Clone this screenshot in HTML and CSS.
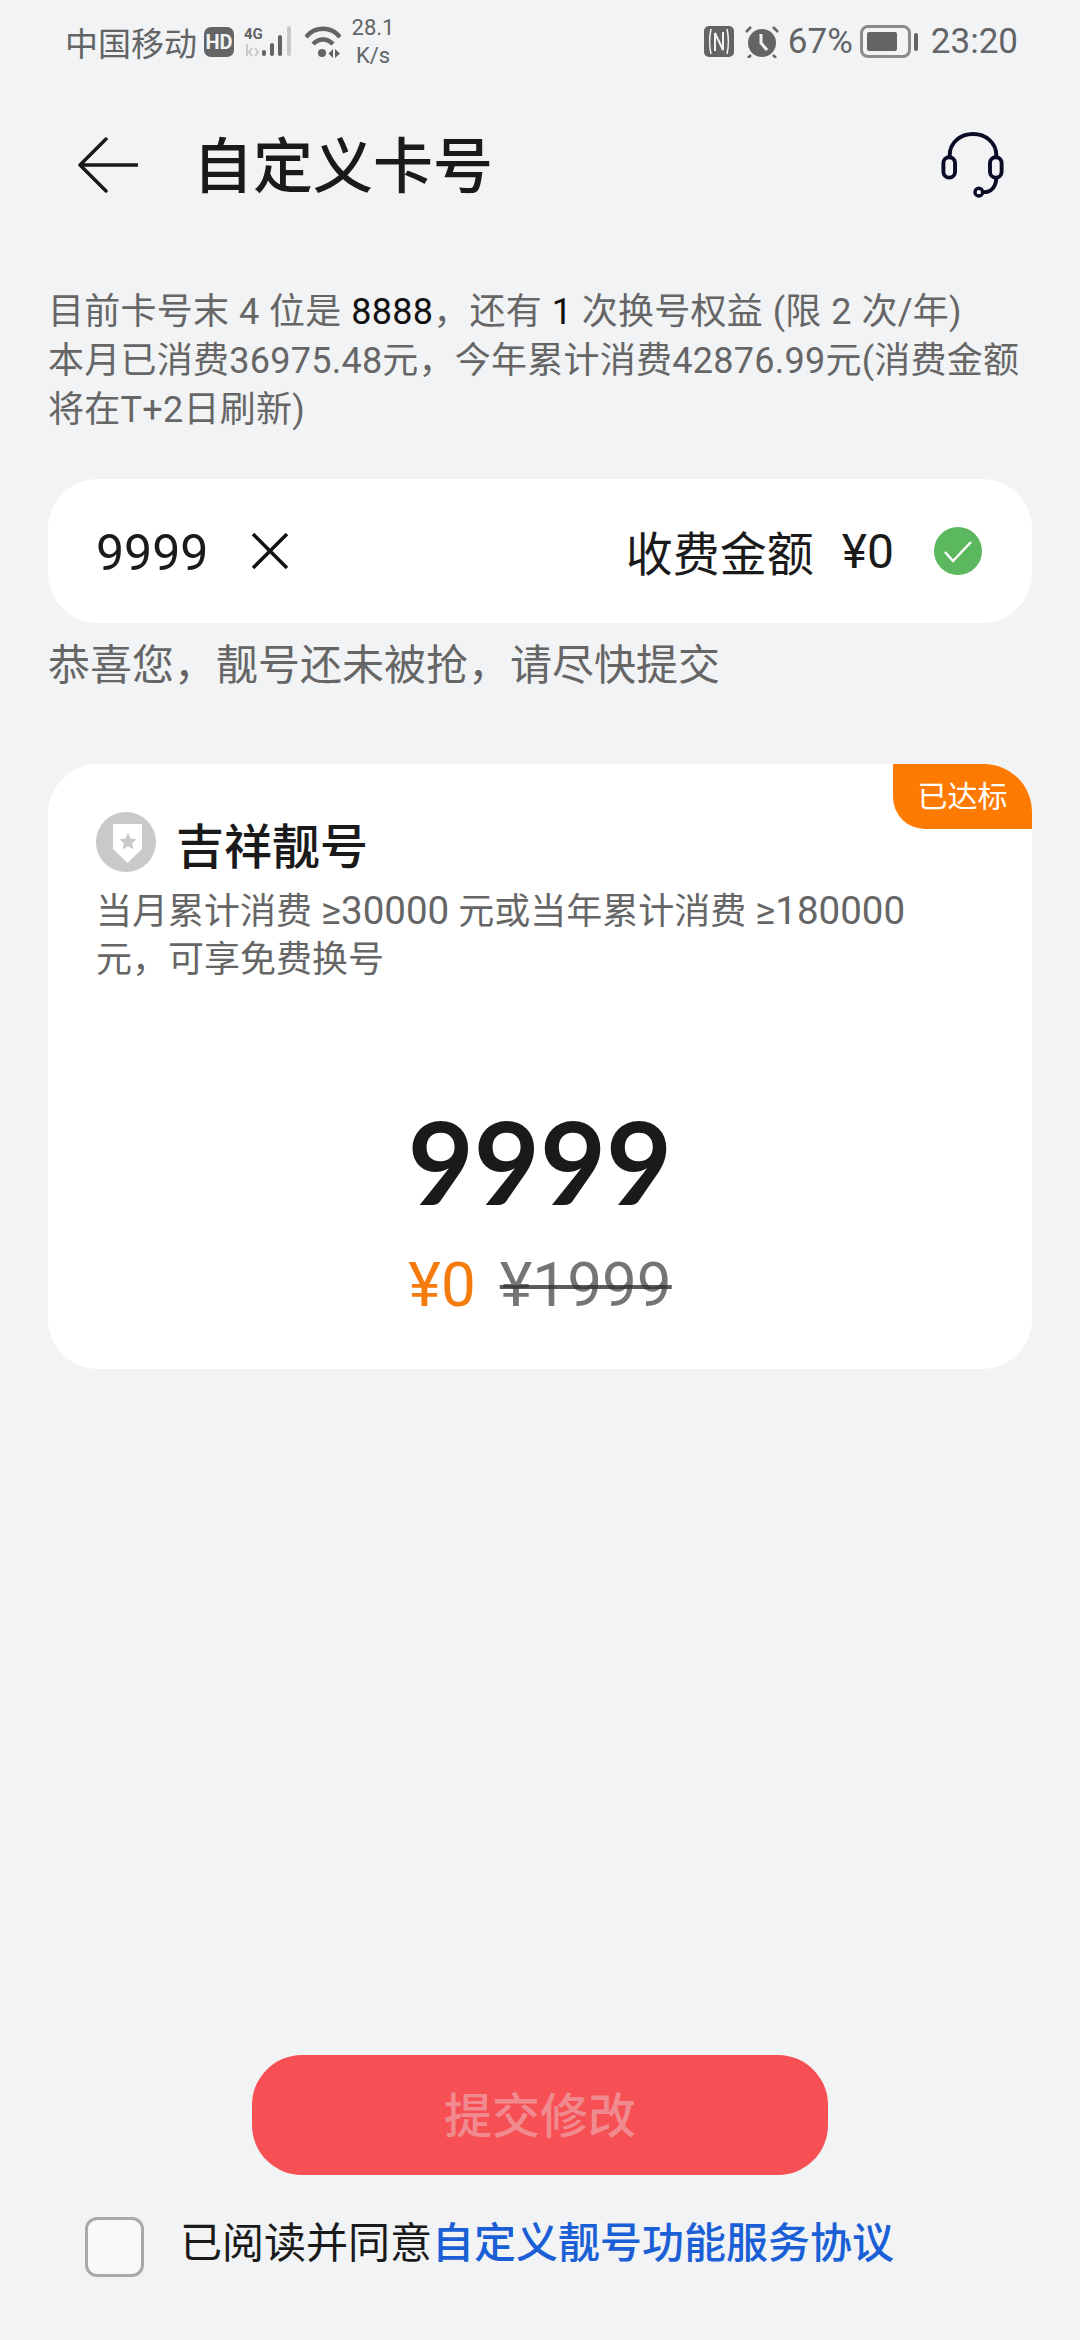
FILE: index.html
```html
<!DOCTYPE html>
<html lang="zh-CN">
  <head>
    <meta charset="UTF-8" />
    <meta name="viewport" content="width=device-width, initial-scale=1.0" />
    <title>自定义卡号</title>
    <link rel="stylesheet" href="styles.css">
  </head>
  <body>
    <div class="page">
      <div class="statusbar">
        <div class="status-left">
          <span class="carrier">中国移动</span>
          <span class="hd">HD</span>
          <svg class="signal" width="50" height="32" viewBox="0 0 50 32">
            <text x="0" y="13" class="signal-4g">4G</text>
            <path d="M3 18v12M8 22l-3 4 3 4M11 22l3 4-3 4" fill="none" stroke="#c8c9cb" stroke-width="2"/>
            <rect x="18" y="24" width="4" height="6" rx="2" fill="#636466"/>
            <rect x="26" y="17" width="4" height="13" rx="2" fill="#636466"/>
            <rect x="34" y="9" width="4" height="21" rx="2" fill="#636466"/>
            <rect x="43" y="0" width="4" height="30" rx="2" fill="#c8c9cb"/>
          </svg>
          <svg class="wifi" width="36" height="32" viewBox="0 0 36 32">
            <path d="M1 11C10 0 26 0 35 11M8 18c6-6 14-6 20 0" fill="none" stroke="#636466" stroke-width="4.500"/>
            <circle cx="17" cy="27" r="4" fill="#636466"/>
            <path d="M28 23l-4.500 4.500 4.500 4.500zM30 23l5 4.500-5 4.500z" fill="#636466"/>
          </svg>
          <span class="speed">28.1<br>K/s</span>
        </div>
        <div class="status-right">
          <svg width="30" height="31" viewBox="0 0 30 31">
            <rect width="30" height="31" rx="5" fill="#636466"/>
            <path d="M7 3C5 12 5 19 7 28M23 3C25 12 25 19 23 28" fill="none" stroke="#f1f3f5" stroke-width="1.500"/>
            <path d="M11 25V7l8 17V6" fill="none" stroke="#f1f3f5" stroke-width="2"/>
          </svg>
          <svg class="alarm" width="34" height="32" viewBox="0 0 34 32">
            <circle cx="17" cy="17" r="14" fill="#636466"/>
            <path d="M16 8v9l6 7" fill="none" stroke="#f1f3f5" stroke-width="3"/>
            <path d="M1 6l5-5M33 6l-5-5M6 29l-3 3M28 29l3 3" stroke="#636466" stroke-width="2.500"/>
          </svg>
          <span class="percent">67%</span>
          <span class="battery"><span class="battery-level"></span></span>
          <span class="battery-cap"></span>
          <span class="clock">23:20</span>
        </div>
      </div>

      <div class="nav">
        <svg class="back" width="60" height="56" viewBox="0 0 60 56">
          <path d="M59 28H2M28 2L2 28 28 54" fill="none" stroke="#1a1a1a" stroke-width="3.500" stroke-linecap="round" stroke-linejoin="round"/>
        </svg>
        <h1 class="nav-title">自定义卡号</h1>
        <svg class="headset" width="66" height="66" viewBox="0 0 66 68">
          <path d="M9 26V24C9 11 20 2 33 2S57 11 57 24V26" fill="none" stroke="#0b0b26" stroke-width="4"/>
          <rect x="2.500" y="26" width="12" height="21" rx="6" fill="none" stroke="#0b0b26" stroke-width="4"/>
          <rect x="50.500" y="26" width="12" height="21" rx="6" fill="none" stroke="#0b0b26" stroke-width="4"/>
          <path d="M57 47C57 56 52 62 44 62" fill="none" stroke="#0b0b26" stroke-width="4"/>
          <circle cx="39" cy="62" r="4" fill="none" stroke="#0b0b26" stroke-width="3.500"/>
        </svg>
      </div>

      <p class="intro">
        目前卡号末 4 位是 <b>8888</b>，还有 <b>1</b> 次换号权益 (限 2 次/年)<br>
        本月已消费36975.48元，今年累计消费42876.99元(消费金额<br>
        将在T+2日刷新)
      </p>

      <div class="input-card">
        <span class="input-value">9999</span>
        <svg class="clear" width="38" height="36" viewBox="0 0 38 36">
          <path d="M2 1l34 34M36 1L2 35" stroke="#111" stroke-width="3.500" fill="none"/>
        </svg>
        <span class="fee-label">收费金额</span>
        <span class="fee-value">¥0</span>
        <svg class="ok" width="48" height="48" viewBox="0 0 48 48">
          <circle cx="24" cy="24" r="24" fill="#5cb85f"/>
          <path d="M11 25l8 9 18-19" fill="none" stroke="#fff" stroke-width="2.500"/>
        </svg>
      </div>

      <p class="hint">恭喜您，靓号还未被抢，请尽快提交</p>

      <div class="card">
        <span class="tag">已达标</span>
        <div class="card-head">
          <svg width="60" height="60" viewBox="0 0 60 60">
            <circle cx="30" cy="30" r="30" fill="#c9c9c9"/>
            <path d="M17 12H46V37L31.500 51 17 37z" fill="#fff"/>
            <path d="M32 21l2.500 5.500 6 .7-4.400 4 1.200 6L32 34.200 26.700 37.200l1.200-6-4.400-4 6-.7z" fill="#c9c9c9"/>
          </svg>
          <h2 class="card-title">吉祥靓号</h2>
        </div>
        <p class="card-desc">当月累计消费 <span class="num">≥30000</span> 元或当年累计消费 <span class="num">≥180000</span><br>元，可享免费换号</p>
        <div class="number">9999</div>
        <div class="price">
          <span class="price-now">¥0</span>
          <span class="price-old">¥1999</span>
        </div>
      </div>

      <div class="footer">
        <button class="submit">提交修改</button>
        <div class="agree">
          <span class="checkbox"></span>
          <span class="agree-text">已阅读并同意<a class="agree-link">自定义靓号功能服务协议</a></span>
        </div>
      </div>
    </div>
  </body>
</html>
```

FILE: styles.css
```css
* {
  margin: 0;
  padding: 0;
  box-sizing: border-box;
}

body {
  font-family: Roboto, "Noto Sans CJK SC", sans-serif;
  background: #f1f3f5;
  color: #1a1a1a;
}

.page {
  height: 2340px;
  padding: 25px 48px 0;
  display: flex;
  flex-direction: column;
  overflow: hidden;
}

.statusbar {
  height: 33px;
  padding: 0 14px 0 17px;
  display: flex;
  justify-content: space-between;
  align-items: center;
  color: #636466;
}

.status-left,
.status-right {
  display: flex;
  align-items: center;
}

.carrier {
  font-size: 33px;
  width: 132px;
  white-space: nowrap;
}

.hd {
  width: 30px;
  height: 30px;
  margin-left: 7px;
  background: #636466;
  border-radius: 7px;
  color: #f1f3f5;
  font-size: 20px;
  font-weight: 700;
  line-height: 30px;
  text-align: center;
}

.signal {
  margin-left: 10px;
}

.signal-4g {
  font-family: Roboto, sans-serif;
  font-size: 15px;
  font-weight: 700;
  fill: #636466;
}

.wifi {
  margin-left: 11px;
}

.speed {
  width: 44px;
  margin-left: 10px;
  font-size: 22px;
  line-height: 28px;
  text-align: center;
}

.alarm {
  margin-left: 11px;
}

.percent {
  margin-left: 9px;
  font-size: 35px;
  width: 66px;
}

.battery {
  width: 51px;
  height: 33px;
  margin-left: 6px;
  padding: 4px;
  border: 3px solid #8a8b8d;
  border-radius: 8px;
}

.battery-level {
  display: block;
  width: 30px;
  height: 100%;
  background: #636466;
  border-radius: 2px;
}

.battery-cap {
  width: 4px;
  height: 18px;
  margin-left: 3px;
  background: #636466;
  border-radius: 2px;
}

.clock {
  margin-left: 13px;
  font-size: 35px;
}

.nav {
  height: 66px;
  margin-top: 74px;
  padding-left: 30px;
  display: flex;
  align-items: center;
}

.nav-title {
  margin-left: 55px;
  padding-top: 6px;
  font-size: 60px;
  font-weight: 500;
  line-height: 66px;
}

.headset {
  margin-left: auto;
  margin-right: 26px;
}

.intro {
  margin-top: 90px;
  font-size: 36px;
  line-height: 49px;
  letter-spacing: 0.25px;
  word-spacing: 0.500px;
  color: #666;
  white-space: nowrap;
}

.intro b {
  font-weight: 400;
  color: #111;
}

.input-card {
  height: 144px;
  margin-top: 44px;
  padding: 0 50px 0 48px;
  background: #fff;
  border-radius: 50px;
  display: flex;
  align-items: center;
}

.input-value {
  padding-top: 4px;
  font-size: 50px;
  width: 155px;
}

.fee-label {
  margin-left: auto;
  padding-bottom: 2px;
  font-size: 47px;
  white-space: nowrap;
}

.fee-value {
  margin-left: 28px;
  font-size: 48px;
}

.ok {
  margin-left: 40px;
}

.hint {
  margin-top: 15px;
  font-size: 42px;
  line-height: 56px;
  color: #666;
}

.card {
  position: relative;
  height: 605px;
  margin-top: 70px;
  padding: 48px 48px 0;
  background: #fff;
  border-radius: 50px;
}

.tag {
  position: absolute;
  top: 0;
  right: 0;
  width: 139px;
  height: 65px;
  background: #ff7a00;
  border-radius: 0 48px 0 32px;
  color: #fff;
  font-size: 30px;
  line-height: 65px;
  text-align: center;
}

.card-head {
  display: flex;
  align-items: center;
  gap: 20px;
  height: 60px;
}

.card-title {
  padding-top: 2px;
  font-size: 48px;
  font-weight: 500;
}

.card-desc {
  margin-top: 15px;
  font-size: 36px;
  line-height: 48px;
  color: #666;
  white-space: nowrap;
}

.num {
  font-size: 38.500px;
}

.number {
  margin-top: 107px;
  font-family: Lato, sans-serif;
  font-size: 114px;
  font-weight: 700;
  line-height: 140px;
  text-align: center;
}

.price {
  margin-top: 19px;
  display: flex;
  justify-content: center;
  gap: 24px;
  font-size: 62px;
  line-height: 70px;
}

.price-now {
  color: #f57c0c;
}

.price-old {
  color: #757575;
  text-decoration: line-through;
  text-decoration-color: rgba(50, 50, 50, 0.8);
  text-decoration-thickness: 4px;
}

.footer {
  margin-top: auto;
  padding-bottom: 63px;
}

.submit {
  display: block;
  width: 576px;
  height: 120px;
  margin: 0 auto;
  padding-bottom: 6px;
  background: #f65055;
  border: none;
  border-radius: 50px;
  color: #f08a8f;
  font-family: inherit;
  font-size: 48px;
  font-weight: 500;
}

.agree {
  height: 60px;
  margin-top: 42px;
  padding-left: 37px;
  display: flex;
  align-items: center;
  gap: 36px;
  font-size: 42px;
  line-height: 50px;
  white-space: nowrap;
}

.agree-text {
  margin-bottom: 7px;
}

.checkbox {
  width: 59px;
  height: 60px;
  background: #f8f9fb;
  border: 3px solid #a9a9a9;
  border-radius: 12px;
}

.agree-link {
  color: #1a5fd6;
  font-weight: 500;
}
```
